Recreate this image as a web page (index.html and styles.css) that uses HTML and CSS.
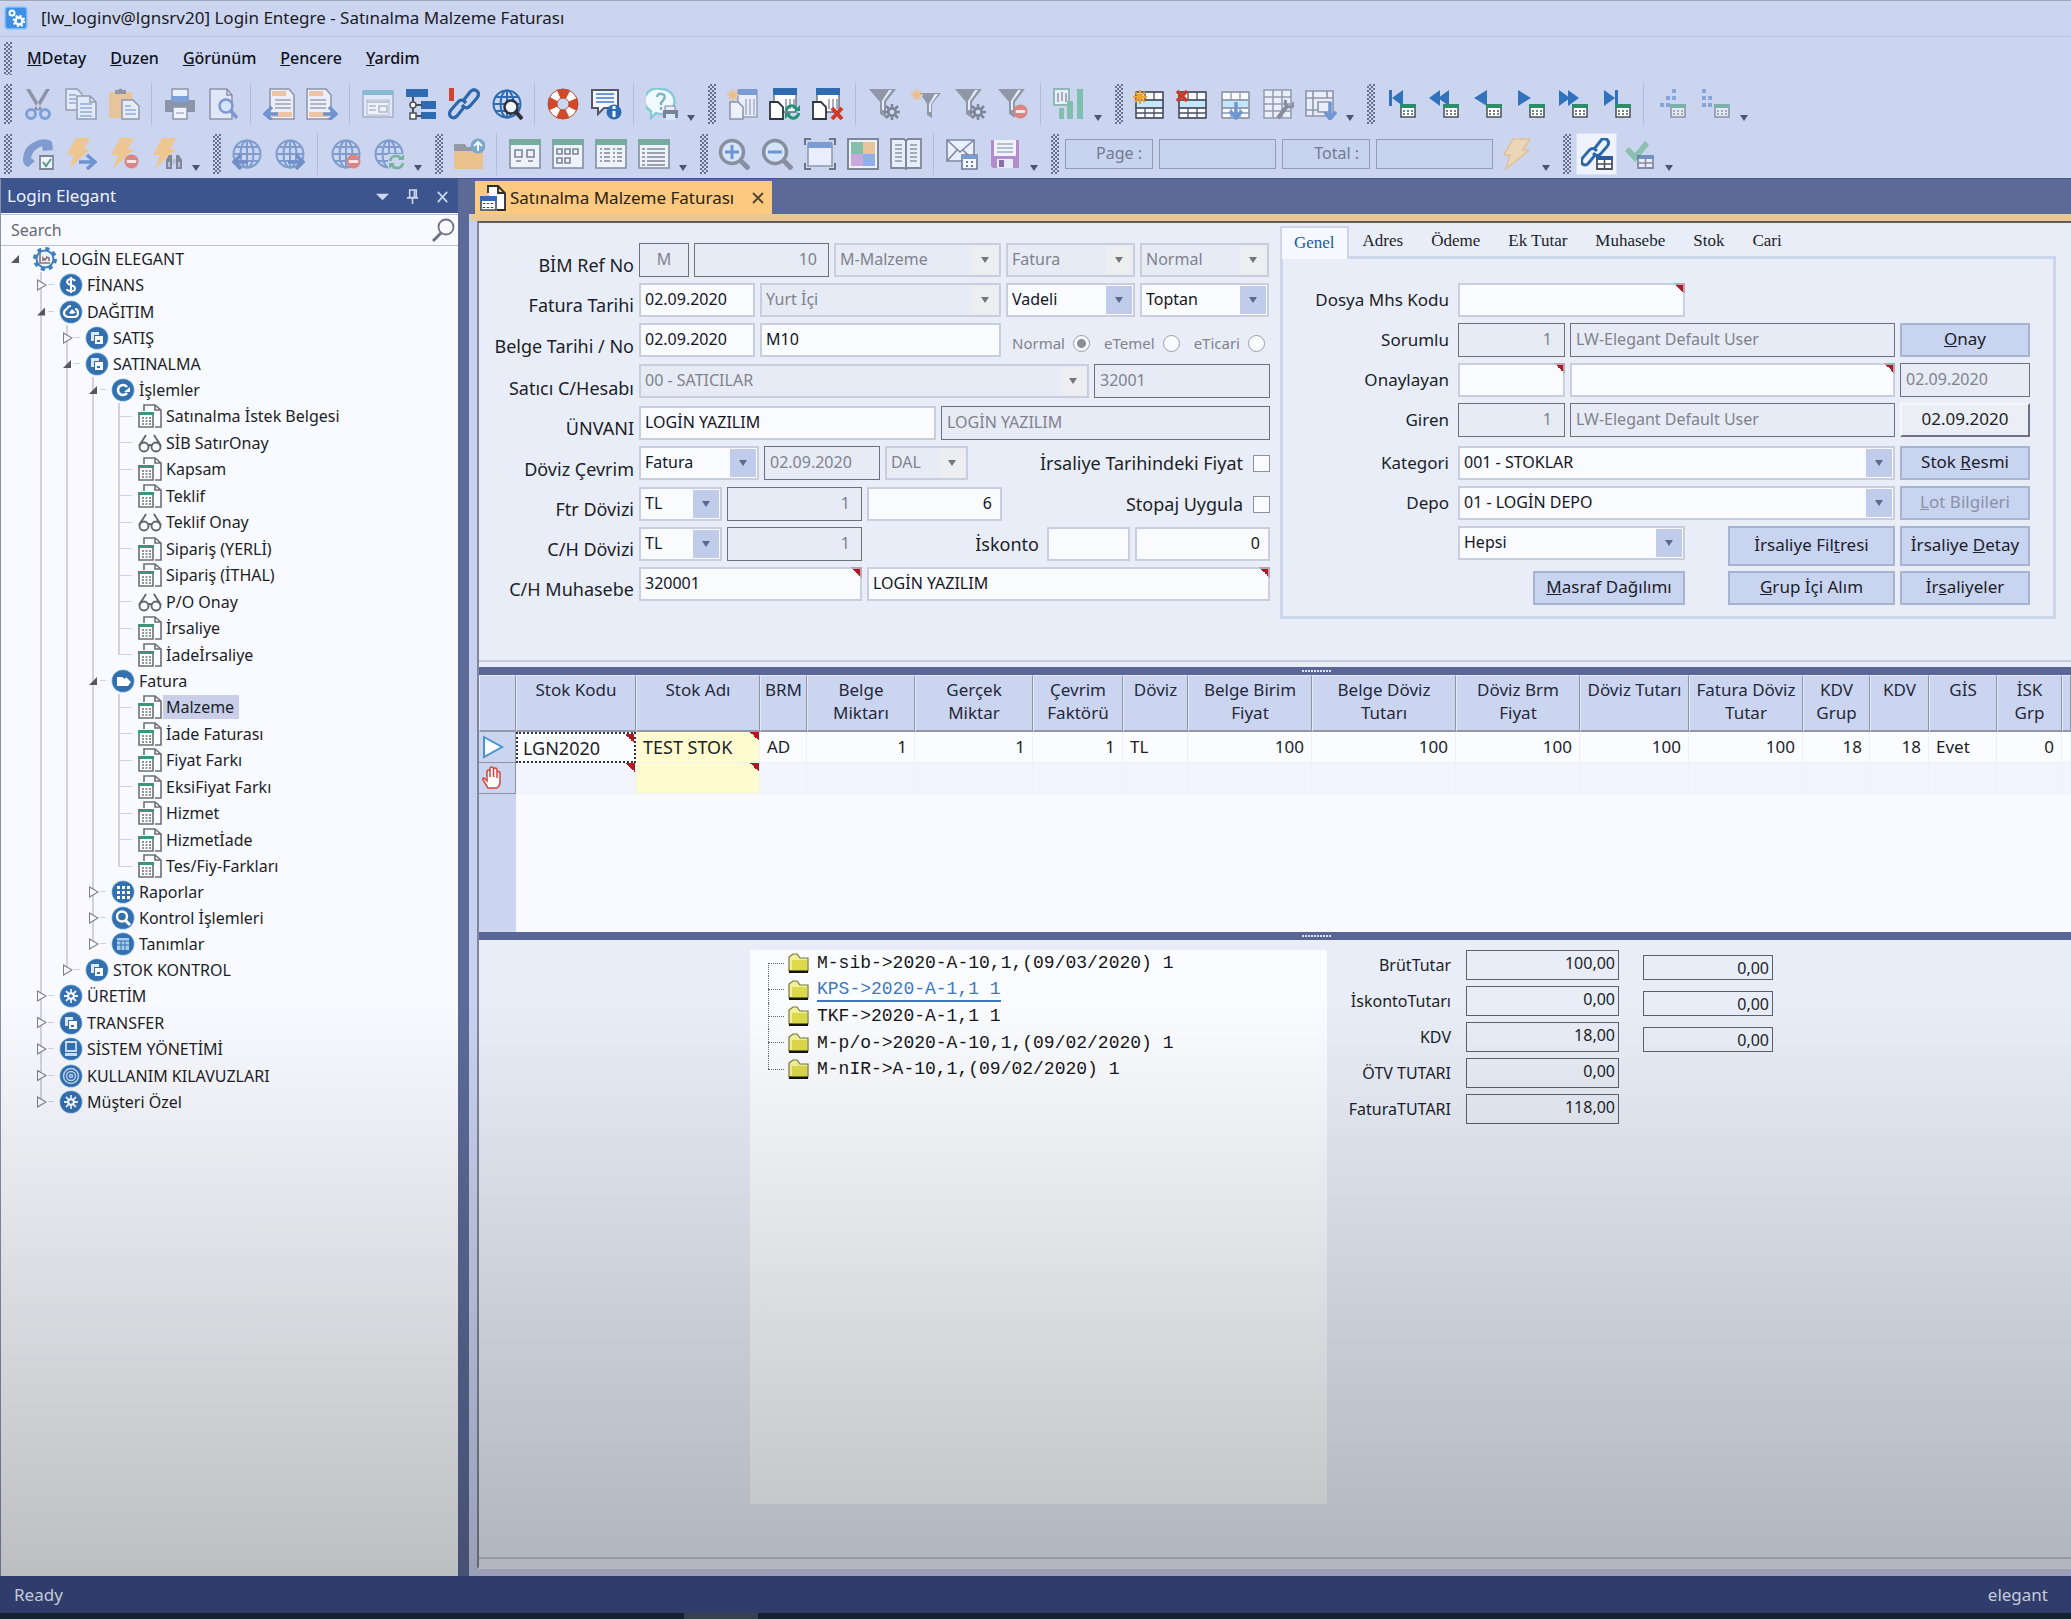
FILE: index.html
```html
<!DOCTYPE html>
<html lang="tr">
<head>
<meta charset="utf-8">
<title>[lw_loginv@lgnsrv20] Login Entegre - Satınalma Malzeme Faturası</title>
<link rel="stylesheet" href="styles.css">
</head>
<body>
<svg class="sprite" aria-hidden="true">
  <defs>
    <!-- toolbar, 32 x 32 -->
    <symbol id="cut" viewBox="0 0 32 32"><path d="M4 1l4 0 12 20-3 2zM28 1l-4 0-12 20 3 2z" fill="#8b93a5"/><circle cx="9" cy="26" r="4.500" fill="none" stroke="#7da0da" stroke-width="3"/><circle cx="23" cy="26" r="4.500" fill="none" stroke="#7da0da" stroke-width="3"/></symbol>
    <symbol id="copy" viewBox="0 0 32 32"><g fill="#e2e9f8" stroke="#939cb0" stroke-width="1.5"><path d="M1 1h11l5 5v16H1z"/><path d="M12 8h13l6 6v17H12z"/><path d="M25 8v6h6" fill="none"/></g><path d="M4 7h7M4 11h7M4 15h7M15 16h12M15 20h12M15 24h12M15 28h12" stroke="#94a9d4" stroke-width="1.5"/></symbol>
    <symbol id="paste" viewBox="0 0 32 32"><path d="M1 4h23v26H1z" fill="#e8c49a"/><path d="M7 6V2h3q2-3 5 0h3v4z" fill="#8f96a6"/><path d="M14 12h11l6 6v13H14z" fill="#e6ecfa" stroke="#8f98ab" stroke-width="1.5"/><path d="M17 18h6M17 22h11M17 26h11" stroke="#94a9d4" stroke-width="1.5"/></symbol>
    <symbol id="print" viewBox="0 0 32 32"><path d="M8 1h16v9H8z" fill="#e9eefb" stroke="#8b94a8" stroke-width="1.5"/><path d="M1 12h30v12H1z" fill="#8b94a8"/><path d="M7 8h18v6H7z" fill="#7da0da"/><path d="M9 19h14v12H9z" fill="#eef2fc" stroke="#8b94a8" stroke-width="1.5"/><path d="M12 25h8" stroke="#8b94a8"/></symbol>
    <symbol id="preview" viewBox="0 0 32 32"><path d="M3 1h17l5 6v24H3z" fill="#dfe7f8" stroke="#8b94a8" stroke-width="1.5"/><path d="M20 1v6h5" fill="none" stroke="#8b94a8" stroke-width="1.5"/><circle cx="19" cy="18" r="6.500" fill="#d3e4fb" stroke="#7d97cf" stroke-width="2.500"/><path d="M24 23l6 7" stroke="#7d97cf" stroke-width="3.500"/></symbol>
    <symbol id="import" viewBox="0 0 32 32"><path d="M7 1h19l5 6v24H7z" fill="#eceffa" stroke="#8b94a8" stroke-width="1.500"/><path d="M9 3h14v5H9zM9 24h20v5H9z" fill="#edc4a4"/><path d="M12 12h16M12 16h16M12 20h16" stroke="#9aa2b4" stroke-width="1.500"/><path d="M15 26H3M9 19l-7 7 7 6" fill="none" stroke="#6f93d0" stroke-width="3.500"/></symbol>
    <symbol id="export" viewBox="0 0 32 32"><path d="M1 1h19l5 6v24H1z" fill="#eceffa" stroke="#8b94a8" stroke-width="1.500"/><path d="M3 3h14v5H3zM3 24h20v5H3z" fill="#edc4a4"/><path d="M4 12h16M4 16h16M4 20h16" stroke="#9aa2b4" stroke-width="1.500"/><path d="M17 26h12M23 19l7 7-7 6" fill="none" stroke="#6f93d0" stroke-width="3.500"/></symbol>
    <symbol id="form" viewBox="0 0 32 32"><path d="M1 3h30v26H1z" fill="#dfe7f8" stroke="#a6afc4" stroke-width="1.500"/><path d="M1 2h30v5H1z" fill="#86b9d3"/><path d="M5 12h22v15H5z" fill="#eef2fb" stroke="#b0b8ca"/><path d="M5 14h22M7 18h7M7 22h7M17 18h8v6h-8z" fill="none" stroke="#b0b8ca" stroke-width="1.600"/></symbol>
    <symbol id="flow" viewBox="0 0 32 32"><path d="M1 1h22v8H1zM16 13h15v8H16zM16 24h15v7H16z" fill="#2f6bb0"/><path d="M8 9v16M8 17h9M8 28h9" stroke="#4a505c" stroke-width="2"/><circle cx="8" cy="17" r="3" fill="#fff" stroke="#4a505c" stroke-width="1.500"/><path d="M5 25h6v6H5z" fill="#fff" stroke="#4a505c" stroke-width="1.500"/></symbol>
    <symbol id="chain" viewBox="0 0 32 32"><g fill="none" stroke="#2c67ad" stroke-width="3.200" stroke-linejoin="round"><path d="M15 13l7-9q3-4 7-1 3 3 0 7l-7 8q-3 3-6 1l-2-2"/><path d="M17 18l-8 10q-3 3-6 1-3-3 0-7l7-8q3-3 6-1l2 2"/></g></symbol>
    <symbol id="link" viewBox="0 0 32 32"><use href="#chain"/><path d="M1 0h5v13H1z" fill="#cf4330"/></symbol>
    <symbol id="globe" viewBox="0 0 32 32"><g fill="none" stroke-width="2"><circle cx="16" cy="16" r="13.500"/><ellipse cx="16" cy="16" rx="6.500" ry="13.500"/><path d="M16 2v28M3 16h26M5 9h22M5 23h22"/></g></symbol>
    <symbol id="globefind" viewBox="0 0 32 32"><use href="#globe" stroke="#2f6bb0"/><circle cx="20" cy="19" r="6.500" fill="#eef4ff" stroke="#2c313b" stroke-width="2.500"/><path d="M25 24l6 7" stroke="#2c313b" stroke-width="4"/></symbol>
    <symbol id="buoy" viewBox="0 0 32 32"><circle cx="16" cy="16" r="10.500" fill="none" stroke="#fff" stroke-width="9"/><circle cx="16" cy="16" r="10.500" fill="none" stroke="#d2482a" stroke-width="9" stroke-dasharray="9.500 7" stroke-dashoffset="4.700"/><circle cx="16" cy="16" r="15" fill="none" stroke="#b5482f"/><circle cx="16" cy="16" r="6" fill="none" stroke="#b5482f"/></symbol>
    <symbol id="tip" viewBox="0 0 32 32"><path d="M2 2h26v18H14l-6 6v-6H2z" fill="#f3f6ff" stroke="#50586a" stroke-width="2"/><path d="M6 6h18M6 10h18M6 14h18" stroke="#6f9ad6" stroke-width="2"/><circle cx="24" cy="24" r="7.500" fill="#2f6bb0"/><path d="M24 18v3M24 23v6" stroke="#fff" stroke-width="3"/></symbol>
    <symbol id="help" viewBox="0 0 32 32"><path d="M15 1a13 12 0 0 1 0 25q-3 0-5-1l-5 5v-7A13 12 0 0 1 15 1z" fill="#f1fbff" stroke="#86cbd6" stroke-width="2.500"/><path d="M11 9q1-4 5-3 4 1 2 5l-3 4v2M15 19v3" fill="none" stroke="#7eb4c4" stroke-width="2.500"/><path d="M19 18h10v5h-10z" fill="#e8eefb" stroke="#7a8498"/><path d="M17 22h15v8H17z" fill="#77839a"/><path d="M20 26h9v6h-9z" fill="#dbe7fb"/></symbol>
    <symbol id="newrec" viewBox="0 0 32 32"><path d="M12 2h19v27H12z" fill="#e6ecf9" stroke="#96a0b5" stroke-width="1.500"/><path d="M12 1h19v6H12z" fill="#7b9bd4"/><path d="M20 11v16M24 11v16M28 11v16" stroke="#a7b0c2" stroke-width="1.500"/><path d="M4 14h8l5 5v12H4z" fill="#edf1fb" stroke="#8992a6" stroke-width="1.500"/><path d="M7 1v12M1 7h12M3 3l8 8M11 3l-8 8" stroke="#edc08b" stroke-width="1.800"/></symbol>
    <symbol id="tabledoc" viewBox="0 0 32 32"><path d="M5 2h22v22H5z" fill="#fff" stroke="#5d6575" stroke-width="1.300"/><path d="M4 0h24v7H4z" fill="#2f6bb0"/><path d="M17 11v10M21 11v10M25 11v10" stroke="#8d95a4" stroke-width="1.500"/><path d="M1 14h8l5 5v12H1z" fill="#fff" stroke="#30343d" stroke-width="1.800"/></symbol>
    <symbol id="refreshrec" viewBox="0 0 32 32"><use href="#tabledoc"/><path d="M17 23q2-6 7-5 3 1 4 4M30 25q-2 6-7 5-3-1-4-4" fill="none" stroke="#249376" stroke-width="3"/><path d="M31 17v6h-6zM16 31v-6h6z" fill="#249376"/></symbol>
    <symbol id="delrec" viewBox="0 0 32 32"><use href="#tabledoc"/><path d="M20 20l10 11M30 20L20 31" stroke="#d33a26" stroke-width="4"/></symbol>
    <symbol id="funnel" viewBox="0 0 32 32"><path d="M1 1h27L18 14v16l-6-4V14z" fill="#8f97a8"/><path d="M21 2h3l-8 11v9h-2v-9z" fill="#e7ecf8"/></symbol>
    <symbol id="gear" viewBox="0 0 16 16"><path d="M8 0v16M0 8h16M2 2l12 12M14 2L2 14" stroke-width="2.600"/><circle cx="8" cy="8" r="3.700" fill="#d7dff4" stroke-width="2.800"/></symbol>
    <symbol id="filterset" viewBox="0 0 32 32"><use href="#funnel"/><use href="#gear" x="16" y="16" width="16" height="16" stroke="#7e8799"/></symbol>
    <symbol id="filternew" viewBox="0 0 32 32"><path d="M9 5h21L21 16v14l-5-3V16z" fill="#8f97a8"/><path d="M24 6h3l-7 10v8h-2v-8z" fill="#e7ecf8"/><path d="M6 1v11M0 7h12M2 3l8 8M10 3l-8 8" stroke="#edc08b" stroke-width="1.800"/></symbol>
    <symbol id="stop" viewBox="0 0 16 16"><circle cx="8" cy="8" r="7.500" fill="#d98583"/><path d="M3 8h10" stroke="#fbecee" stroke-width="3"/></symbol>
    <symbol id="filterdel" viewBox="0 0 32 32"><use href="#funnel"/><use href="#stop" x="16" y="16" width="15" height="15"/></symbol>
    <symbol id="chart" viewBox="0 0 32 32"><path d="M1 1h15v16H1z" fill="#e8eefa" stroke="#8fb9b4" stroke-width="2"/><path d="M5 5v9M9 4v9M13 5v9" stroke="#8f97a8" stroke-width="1.500"/><path d="M6 20h5v11H6zM14 13h6v18h-6zM24 1h6v30h-6z" fill="#7fbfb0"/></symbol>
    <symbol id="gridbase" viewBox="0 0 32 32"><path d="M3 4h27v26H3z" fill="#f8faff"/><path d="M3 12h27v8H3z" fill="#c4e6fa"/><path d="M3 4h27v26H3zM3 12h27M3 20h27M12 4v8M21 4v8M12 20v10M21 20v10M3 25h27" fill="none" stroke-width="1.300"/></symbol>
    <symbol id="rownew" viewBox="0 0 32 32"><use href="#gridbase" stroke="#4a505d"/><path d="M7 2v14M0 9h14M2 4l10 10M12 4L2 14" stroke="#efa22f" stroke-width="2.200"/></symbol>
    <symbol id="rowdel" viewBox="0 0 32 32"><use href="#gridbase" stroke="#4a505d"/><path d="M1 3l10 10M11 3L1 13" stroke="#cf3a26" stroke-width="3.500"/></symbol>
    <symbol id="rowdown" viewBox="0 0 32 32"><use href="#gridbase" stroke="#8d96aa"/><path d="M17 14v15M11 23l6 7 6-7" fill="none" stroke="#6f96d4" stroke-width="3.500"/></symbol>
    <symbol id="rowtool" viewBox="0 0 32 32"><path d="M2 2h27v28H2z" fill="#e9eefa"/><path d="M2 2h27v28H2zM2 9h27M2 16h27M2 23h27M11 2v28M20 2v28" fill="none" stroke="#939cae" stroke-width="1.500"/><path d="M16 30l9-12" stroke="#858d9e" stroke-width="4"/><path d="M24 12q-2 4 1 6t6 0l1-4" fill="none" stroke="#858d9e" stroke-width="3"/></symbol>
    <symbol id="colmove" viewBox="0 0 32 32"><path d="M1 3h27v25H1z" fill="#e9eefa"/><path d="M1 3h27v25H1zM1 10h27M1 22h12M8 3v25M22 3v7M13 14h12v10H13z" fill="none" stroke="#8d96aa" stroke-width="1.600"/><path d="M25 14v15M20 24l5 7 6-7" fill="none" stroke="#6f96d4" stroke-width="3.500"/></symbol>
    <symbol id="cal" viewBox="0 0 16 14"><path d="M1 1h14v12H1z" fill="#fff" stroke="#4a505a" stroke-width="1.500"/><path d="M0 0h16v4H0z" fill="#2d8d69"/><path d="M4 6v2M8 6v2M12 6v2M4 9v2M8 9v2M12 9v2" stroke="#6a707a" stroke-width="1.800"/></symbol>
    <symbol id="first" viewBox="-3 0 32 32"><path d="M1 2h3v16H1zM15 2v16L4 10z" fill="#3272bd"/><use href="#cal" x="12" y="16" width="16" height="14"/></symbol>
    <symbol id="rew" viewBox="-3 0 32 32"><path d="M9 2v16L-2 10zM18 2v16L7 10z" fill="#3272bd"/><use href="#cal" x="12" y="16" width="16" height="14"/></symbol>
    <symbol id="prev" viewBox="-3 0 32 32"><path d="M13 2v16L0 10z" fill="#3272bd"/><use href="#cal" x="12" y="16" width="16" height="14"/></symbol>
    <symbol id="next" viewBox="-3 0 32 32"><path d="M1 2v16l13-8z" fill="#3272bd"/><use href="#cal" x="12" y="16" width="16" height="14"/></symbol>
    <symbol id="fwd" viewBox="-3 0 32 32"><path d="M-1 2v16l11-8zM8 2v16l11-8z" fill="#3272bd"/><use href="#cal" x="12" y="16" width="16" height="14"/></symbol>
    <symbol id="last" viewBox="-3 0 32 32"><path d="M1 2v16l11-8zM12 2h3v16h-3z" fill="#3272bd"/><use href="#cal" x="12" y="16" width="16" height="14"/></symbol>
    <symbol id="dotsl" viewBox="0 0 32 32"><path d="M16 1h4v4h-4zM10 8h4v4h-4zM16 8h4v4h-4zM4 15h4v4H4zM10 15h4v4h-4z" fill="#86a6d9"/><use href="#cal" x="14" y="16" width="16" height="14" opacity=".5"/></symbol>
    <symbol id="dotsr" viewBox="0 0 32 32"><path d="M3 1h4v4H3zM3 8h4v4H3zM9 8h4v4H9zM3 15h4v4H3zM9 15h4v4H9z" fill="#86a6d9"/><use href="#cal" x="15" y="16" width="16" height="14" opacity=".5"/></symbol>
    <symbol id="phone" viewBox="0 0 32 32"><path d="M1 22Q1 7 17 2q9-2 13 2l1 8-10 1-1-5Q10 12 9 20l4 3-7 6q-5-2-5-7z" fill="#7f9cd0"/><path d="M18 18h13v13H18z" fill="#eef2fc" stroke="#7f889b" stroke-width="1.800"/><path d="M21 24l3 4 5-7" fill="none" stroke="#5f9a86" stroke-width="2"/></symbol>
    <symbol id="boltshape" viewBox="0 0 32 32"><path d="M12 0h14l-6 11h6L5 31l5-14H3z" fill="#edc690"/></symbol>
    <symbol id="boltgo" viewBox="0 0 32 32"><use href="#boltshape" x="-1" y="0" width="32" height="32"/><path d="M14 24h14M22 17l8 7-8 7" fill="none" stroke="#6f93d0" stroke-width="3.500"/></symbol>
    <symbol id="boltstop" viewBox="0 0 32 32"><use href="#boltshape"/><use href="#stop" x="16" y="16" width="15" height="15"/></symbol>
    <symbol id="boltfind" viewBox="0 0 32 32"><use href="#boltshape" x="-1" y="0" width="32" height="32"/><path d="M15 31v-9l3-5h3v14zM31 31v-9l-3-5h-3v14z" fill="#7f8798"/><path d="M21 21h4v5h-4zM17 24h2v5h-2zM27 24h2v5h-2z" fill="#b9c2d6"/></symbol>
    <symbol id="globeback" viewBox="0 0 32 32"><use href="#globe" stroke="#7f9ccf"/><path d="M17 24H4M10 17l-7 7 7 7" fill="none" stroke="#6f8fc6" stroke-width="3.500"/></symbol>
    <symbol id="globegof" viewBox="0 0 32 32"><use href="#globe" stroke="#7f9ccf"/><path d="M14 24h14M22 17l7 7-7 7" fill="none" stroke="#6f8fc6" stroke-width="3.500"/></symbol>
    <symbol id="globestop" viewBox="0 0 32 32"><use href="#globe" stroke="#7f9ccf"/><use href="#stop" x="16" y="16" width="15" height="15"/></symbol>
    <symbol id="globesync" viewBox="0 0 32 32"><use href="#globe" stroke="#7f9ccf"/><path d="M15 16h17v16H15z" fill="#cbd5f0"/><path d="M17 23q1-5 6-5 4 0 5 3M30 25q-1 5-6 5-4 0-5-3" fill="none" stroke="#76b39b" stroke-width="2.500"/><path d="M31 16v6h-6zM16 31v-6h6z" fill="#76b39b"/></symbol>
    <symbol id="folderup" viewBox="0 0 32 32"><path d="M1 6h11l2 3h14v4H1z" fill="#9299a8"/><path d="M1 13h29v18H1z" fill="#eac08c"/><circle cx="25" cy="8" r="7.500" fill="#7aa7cf"/><path d="M25 13V4M21 8l4-4 4 4" fill="none" stroke="#f2f7ff" stroke-width="2"/></symbol>
    <symbol id="view" viewBox="0 0 32 32"><path d="M1 2h30v28H1z" fill="#eef2fb" stroke="#858d9d" stroke-width="1.600"/><path d="M0 1h32v6H0z" fill="#77ab9f"/></symbol>
    <symbol id="view1" viewBox="0 0 32 32"><use href="#view"/><path d="M6 12h7v7H6zM18 12h7v7h-7zM7 23h5M19 23h5" fill="none" stroke="#7d8595" stroke-width="1.600"/></symbol>
    <symbol id="view2" viewBox="0 0 32 32"><use href="#view"/><path d="M5 11h5v5H5zM13 11h5v5h-5zM21 11h5v5h-5zM5 20h5v5H5zM13 20h5v5h-5z" fill="none" stroke="#7d8595" stroke-width="1.600"/></symbol>
    <symbol id="view3" viewBox="0 0 32 32"><use href="#view"/><path d="M5 11h2M9 11h6M5 15h2M9 15h6M5 19h2M9 19h6M5 23h2M9 23h6M18 11h2M22 11h5M18 15h2M22 15h5M18 19h2M22 19h5M18 23h2M22 23h5" stroke="#7d8595" stroke-width="1.600"/></symbol>
    <symbol id="view4" viewBox="0 0 32 32"><use href="#view"/><path d="M4 11h3M9 11h18M4 15h3M9 15h18M4 19h3M9 19h18M4 23h3M9 23h18M4 27h3M9 27h18" stroke="#7d8595" stroke-width="1.600"/></symbol>
    <symbol id="zoomin" viewBox="0 0 32 32"><circle cx="14" cy="14" r="11.500" fill="#d5e4fa" stroke="#878fa0" stroke-width="3.500"/><path d="M22 22l9 9" stroke="#878fa0" stroke-width="5"/><path d="M7 14h14M14 7v14" stroke="#6f93d0" stroke-width="3"/></symbol>
    <symbol id="zoomout" viewBox="0 0 32 32"><circle cx="14" cy="14" r="11.500" fill="#d5e4fa" stroke="#878fa0" stroke-width="3.500"/><path d="M22 22l9 9" stroke="#878fa0" stroke-width="5"/><path d="M7 14h14" stroke="#6f93d0" stroke-width="3"/></symbol>
    <symbol id="fit" viewBox="0 0 32 32"><path d="M4 6h24v22H4z" fill="#e8eefb" stroke="#8d96aa" stroke-width="1.500"/><path d="M4 4h24v6H4z" fill="#7b9bd4"/><path d="M1 7V1h6M25 1h6v6M31 25v6h-6M7 31H1v-6" fill="none" stroke="#6b7385" stroke-width="2"/></symbol>
    <symbol id="palette" viewBox="0 0 32 32"><path d="M1 1h30v30H1z" fill="#eef1fa" stroke="#7f8798" stroke-width="2"/><path d="M4 4h12v12H4z" fill="#83bfad"/><path d="M16 4h12v12H16z" fill="#e8c49a"/><path d="M4 16h12v12H4z" fill="#c9a9dc"/><path d="M16 16h12v12H16z" fill="#8fb0ea"/></symbol>
    <symbol id="book" viewBox="0 0 32 32"><path d="M1 1h13l2 2 2-2h13v29H18l-2 1-2-1H1z" fill="#e6eefa" stroke="#7f8798" stroke-width="1.800"/><path d="M16 3v28" stroke="#7f8798" stroke-width="2"/><path d="M5 7h7M5 11h7M5 15h7M5 19h7M5 23h7M20 7h7M20 11h7M20 15h7M20 19h7M20 23h7" stroke="#8f97a8" stroke-width="1.600"/></symbol>
    <symbol id="mail" viewBox="0 0 32 32"><path d="M1 2h27v21H1z" fill="#eaf0fb" stroke="#8088a0" stroke-width="1.600"/><path d="M1 2l13 12L28 2M1 23l10-11M28 23L17 12" fill="none" stroke="#8088a0" stroke-width="1.600"/><path d="M16 17h15v14H16z" fill="#f3f6fd" stroke="#6d7b9c" stroke-width="1.600"/><path d="M16 17h15v4H16z" fill="#7b9bd4"/><path d="M20 24h2M25 24h2M20 28h2M25 28h2" stroke="#6d7b9c" stroke-width="2"/></symbol>
    <symbol id="save" viewBox="0 0 32 32"><path d="M2 2h28v28H4l-2-2z" fill="#b48bcb"/><path d="M5 2h22v16H5z" fill="#eff3fc"/><path d="M8 6h16M8 10h16M8 14h16" stroke="#a5adbd" stroke-width="1.600"/><path d="M8 21h16v9H8z" fill="#e6ebf7"/><path d="M10 22h5v7h-5z" fill="#8a70a5"/></symbol>
    <symbol id="run" viewBox="0 0 32 32"><path d="M12 1h17l-7 11h6L5 31l4-14H3z" fill="#ecd6b8" stroke="#e0c096" stroke-width="1.500"/></symbol>
    <symbol id="tbl" viewBox="0 0 17 14"><path d="M1 1h15v12H1z" fill="#fff" stroke="#4b5261" stroke-width="1.800"/><path d="M0 0h17v4H0z" fill="#2c5c9c"/><path d="M8.500 4v9M1 8h15" stroke="#4b5261" stroke-width="1.600"/></symbol>
    <symbol id="linktable" viewBox="0 0 32 32"><use href="#chain" x="-1" y="-1" width="30" height="30"/><use href="#tbl" x="15" y="18" width="17" height="14"/></symbol>
    <symbol id="checktable" viewBox="0 0 32 32"><path d="M1 13l4-4 6 6L21 3l4 4-14 17z" fill="#8bbfb0"/><use href="#tbl" x="13" y="17" width="17" height="14" opacity=".55"/></symbol>
    <!-- navigation tree, 24 x 24 -->
    <symbol id="disc" viewBox="0 0 24 24"><circle cx="12" cy="12" r="11.500" fill="#8cc4f2"/><circle cx="12" cy="12" r="10.800" fill="#346fae"/></symbol>
    <symbol id="t-root" viewBox="0 0 24 24"><circle cx="12" cy="12" r="10" fill="none" stroke="#3f7fbd" stroke-width="4" stroke-dasharray="4 3.850"/><circle cx="12" cy="12" r="8.500" fill="#eef3fb" stroke="#3f7fbd" stroke-width="2"/><path d="M7 6v10h10M10 14v-3l2 2 2-3 2 1v3" fill="none" stroke="#8a6f78" stroke-width="1.600"/></symbol>
    <symbol id="t-money" viewBox="0 0 24 24"><use href="#disc"/><path d="M16 8q-1-2-4-2t-4 2.500q0 2.500 4 3.500t4 3.500-4 2.500-4-2M12 4v16" fill="none" stroke="#fff" stroke-width="2"/></symbol>
    <symbol id="t-dist" viewBox="0 0 24 24"><use href="#disc"/><path d="M8 9q-3 1-3 4t4 4h6q4 0 4-4t-3-4M8 9q1-3 4-3" fill="none" stroke="#fff" stroke-width="2.200"/><path d="M10 13l3-4 4 4h-2q-1 2-5 0z" fill="#fff"/></symbol>
    <symbol id="t-copy" viewBox="0 0 24 24"><use href="#disc"/><path d="M6 6h8v3H9v6H6z" fill="#d9e7f7"/><path d="M10 10h8v8h-8z" fill="#fff"/><path d="M12 14h3v2h-3z" fill="#346fae"/></symbol>
    <symbol id="t-cycle" viewBox="0 0 24 24"><use href="#disc"/><path d="M16 9a5 5 0 1 0 0 6" fill="none" stroke="#fff" stroke-width="2.600"/><path d="M19 9v5h-6z" fill="#fff"/></symbol>
    <symbol id="t-inv" viewBox="0 0 24 24"><use href="#disc"/><path d="M6 8h5l3 2 1-2 5 5-3 4H6z" fill="#fff"/></symbol>
    <symbol id="t-grid" viewBox="0 0 24 24"><use href="#disc"/><path d="M6 6h3v3H6zM11 6h3v3h-3zM16 6h3v3h-3zM6 11h3v3H6zM11 11h3v3h-3zM16 11h3v3h-3zM6 16h3v3H6zM11 16h3v3h-3zM16 16h3v3h-3z" fill="#fff"/></symbol>
    <symbol id="t-find" viewBox="0 0 24 24"><use href="#disc"/><circle cx="11" cy="10.500" r="5" fill="none" stroke="#fff" stroke-width="2.400"/><path d="M14 14l5 5" stroke="#fff" stroke-width="3"/></symbol>
    <symbol id="t-def" viewBox="0 0 24 24"><use href="#disc"/><path d="M6 6h12v12H6z" fill="#a9cdef"/><path d="M6 9h12M6 13h12M10 9v9M14 9v9" stroke="#346fae"/></symbol>
    <symbol id="t-gear" viewBox="0 0 24 24"><use href="#disc"/><path d="M12 5v14M5 12h14M7 7l10 10M17 7L7 17" stroke="#e4eefa" stroke-width="1.800"/><circle cx="12" cy="12" r="2.800" fill="#346fae" stroke="#fff" stroke-width="2"/></symbol>
    <symbol id="t-pc" viewBox="0 0 24 24"><use href="#disc"/><path d="M7 5h10v9H7z" fill="none" stroke="#cfe2f6" stroke-width="1.800"/><path d="M6 16h12v3H6z" fill="#cfe2f6"/></symbol>
    <symbol id="t-guide" viewBox="0 0 24 24"><use href="#disc"/><g fill="none" stroke="#b9d5f0" stroke-width="1.500"><circle cx="12" cy="12" r="7.500"/><circle cx="12" cy="12" r="4.500"/><circle cx="12" cy="12" r="1.500"/></g></symbol>
    <symbol id="t-doc" viewBox="0 0 24 24"><path d="M6 7V1h11l6 5v17h-6M17 1v5h6" fill="#fbfcff" stroke="#6d6f76" stroke-width="1.600"/><path d="M1 9h14v14H1z" fill="#fff" stroke="#6d6f76" stroke-width="1.600"/><path d="M0 8h16v3H0z" fill="#3f9478"/><path d="M4 14h2M7.500 14h2M11 14h2M4 17h2M7.500 17h2M11 17h2M4 20h2M7.500 20h2M11 20h2" stroke="#6d6f76" stroke-width="1.600"/></symbol>
    <symbol id="t-glasses" viewBox="0 0 24 24"><g fill="none" stroke="#5f6269" stroke-width="1.800"><circle cx="6" cy="16" r="4.500"/><circle cx="18" cy="16" r="4.500"/><path d="M10 15q2-2 4 0M1 15l7-11M23 15l-7-11"/></g></symbol>
    <symbol id="folder" viewBox="0 0 21 20"><path d="M1 18V4l4-3h4l3 4h8v13z" fill="#f3f09a" stroke="#77763c" stroke-width="1.200"/><path d="M4 7h15v11H4z" fill="#dcd94c"/><path d="M1 17.500h19v2.500H1z" fill="#15140a"/></symbol>
  </defs>
</svg>

<header class="titlebar">
  <svg class="appicon" viewBox="0 0 24 24"><rect x="1" y="1" width="22" height="22" rx="3" fill="#3f8fe6" stroke="#8ec6fa" stroke-width="1.500"/><g fill="none" stroke="#fff"><circle cx="8" cy="7" r="2.500" stroke-width="2"/><circle cx="15" cy="15" r="3.500" stroke-width="2.500"/><circle cx="15" cy="15" r="5.300" stroke-width="2" stroke-dasharray="2 2.160"/></g></svg>
  <h1>[lw_loginv@lgnsrv20] Login Entegre - Satınalma Malzeme Faturası</h1>
</header>

<nav class="menubar" aria-label="Menü">
  <i class="grip"></i>
  <button><u>M</u>Detay</button><button><u>D</u>uzen</button><button><u>G</u>örünüm</button><button><u>P</u>encere</button><button><u>Y</u>ardim</button>
</nav>

<div class="toolbar" role="toolbar" aria-label="Standart">
  <i class="grip"></i>
  <button aria-label="Kes"><svg><use href="#cut"/></svg></button><button aria-label="Kopyala"><svg><use href="#copy"/></svg></button><button aria-label="Yapıştır"><svg><use href="#paste"/></svg></button><i class="sep"></i>
  <button aria-label="Yazdır"><svg><use href="#print"/></svg></button><button aria-label="Önizleme"><svg><use href="#preview"/></svg></button><i class="sep"></i>
  <button aria-label="İçe al"><svg><use href="#import"/></svg></button><button aria-label="Dışa ver"><svg><use href="#export"/></svg></button><i class="sep"></i>
  <button aria-label="Form"><svg><use href="#form"/></svg></button><button aria-label="Akış"><svg><use href="#flow"/></svg></button><button aria-label="Bağlantı"><svg><use href="#link"/></svg></button><button aria-label="Web ara"><svg><use href="#globefind"/></svg></button><i class="sep"></i>
  <button aria-label="Destek"><svg><use href="#buoy"/></svg></button><button aria-label="Bilgi"><svg><use href="#tip"/></svg></button><i class="sep"></i>
  <button aria-label="Yardım"><svg><use href="#help"/></svg></button><button class="more" aria-label="Diğer"></button>
  <i class="grip"></i>
  <button aria-label="Yeni kayıt"><svg><use href="#newrec"/></svg></button><button aria-label="Kaydı yenile"><svg><use href="#refreshrec"/></svg></button><button aria-label="Kaydı sil"><svg><use href="#delrec"/></svg></button><i class="sep"></i>
  <button aria-label="Filtre ayarı"><svg><use href="#filterset"/></svg></button><button aria-label="Yeni filtre"><svg><use href="#filternew"/></svg></button><button aria-label="Filtre düzenle"><svg><use href="#filterset"/></svg></button><button aria-label="Filtre kaldır"><svg><use href="#filterdel"/></svg></button><i class="sep"></i>
  <button aria-label="Grafik"><svg><use href="#chart"/></svg></button><button class="more" aria-label="Diğer"></button>
  <i class="grip"></i>
  <button aria-label="Satır ekle"><svg><use href="#rownew"/></svg></button><button aria-label="Satır sil"><svg><use href="#rowdel"/></svg></button><button aria-label="Satır indir"><svg><use href="#rowdown"/></svg></button><button aria-label="Tablo ayarı"><svg><use href="#rowtool"/></svg></button><button aria-label="Sütun taşı"><svg><use href="#colmove"/></svg></button><button class="more" aria-label="Diğer"></button>
  <i class="grip"></i>
  <button aria-label="İlk"><svg><use href="#first"/></svg></button><button aria-label="Hızlı geri"><svg><use href="#rew"/></svg></button><button aria-label="Önceki"><svg><use href="#prev"/></svg></button><button aria-label="Sonraki"><svg><use href="#next"/></svg></button><button aria-label="Hızlı ileri"><svg><use href="#fwd"/></svg></button><button aria-label="Son"><svg><use href="#last"/></svg></button><i class="sep"></i>
  <button aria-label="Üst düzey"><svg><use href="#dotsl"/></svg></button><button aria-label="Alt düzey"><svg><use href="#dotsr"/></svg></button><button class="more" aria-label="Diğer"></button>
</div>

<div class="toolbar tools" role="toolbar" aria-label="Araçlar">
  <i class="grip"></i>
  <button aria-label="Ara"><svg><use href="#phone"/></svg></button><button aria-label="Çalıştır"><svg><use href="#boltgo"/></svg></button><button aria-label="Durdur"><svg><use href="#boltstop"/></svg></button><button aria-label="İzle"><svg><use href="#boltfind"/></svg></button><button class="more" aria-label="Diğer"></button>
  <i class="grip"></i>
  <button aria-label="Web geri"><svg><use href="#globeback"/></svg></button><button aria-label="Web ileri"><svg><use href="#globegof"/></svg></button><i class="sep"></i>
  <button aria-label="Web durdur"><svg><use href="#globestop"/></svg></button><button aria-label="Web yenile"><svg><use href="#globesync"/></svg></button><button class="more" aria-label="Diğer"></button>
  <i class="grip"></i>
  <button aria-label="Üst klasör"><svg><use href="#folderup"/></svg></button><i class="sep"></i>
  <button aria-label="Büyük simge"><svg><use href="#view1"/></svg></button><button aria-label="Küçük simge"><svg><use href="#view2"/></svg></button><button aria-label="Liste"><svg><use href="#view3"/></svg></button><button aria-label="Ayrıntı"><svg><use href="#view4"/></svg></button><button class="more" aria-label="Diğer"></button>
  <i class="grip"></i>
  <button aria-label="Yakınlaştır"><svg><use href="#zoomin"/></svg></button><button aria-label="Uzaklaştır"><svg><use href="#zoomout"/></svg></button><button aria-label="Sığdır"><svg><use href="#fit"/></svg></button><button aria-label="Renkler"><svg><use href="#palette"/></svg></button><button aria-label="Sayfalar"><svg><use href="#book"/></svg></button><i class="sep"></i>
  <button aria-label="Posta"><svg><use href="#mail"/></svg></button><button aria-label="Kaydet"><svg><use href="#save"/></svg></button><button class="more" aria-label="Diğer"></button>
  <i class="grip"></i>
  <div class="pager"><label class="box" for="page">Page :</label><input class="box wide" id="page" disabled><label class="box" for="total">Total :</label><input class="box wide" id="total" disabled></div>
  <button aria-label="Yürüt"><svg><use href="#run"/></svg></button><button class="more" aria-label="Diğer"></button>
  <i class="grip"></i>
  <button class="on" aria-label="Bağla" aria-pressed="true"><svg><use href="#linktable"/></svg></button><button aria-label="Onayla"><svg><use href="#checktable"/></svg></button><button class="more" aria-label="Diğer"></button>
</div>

<div class="workspace">
  <aside class="side">
    <div class="side-head"><h2>Login Elegant</h2>
      <button aria-label="Menü"><svg viewBox="0 0 16 16"><path d="M1 5h14l-7 7z" fill="#cdd7ee"/></svg></button>
      <button aria-label="Sabitle"><svg viewBox="0 0 16 16"><path d="M5 1h7v8H5zM10 1v8M2 9.500h12M8 10v6" fill="none" stroke="#cdd7ee" stroke-width="1.700"/></svg></button>
      <button aria-label="Kapat"><svg viewBox="0 0 16 16"><path d="M3 3l10 11M13 3L3 14" stroke="#cdd7ee" stroke-width="1.800"/></svg></button>
    </div>
    <div class="search"><input type="text" placeholder="Search" aria-label="Search"><svg viewBox="0 0 24 24"><circle cx="15" cy="9" r="7.500" fill="none" stroke="#6d7184" stroke-width="1.800"/><path d="M10 15l-8 8" stroke="#6d7184" stroke-width="3"/></svg></div>
    <ul class="tree">
      <li class="root"><div class="row"><i class="tw open"></i><svg><use href="#t-root"/></svg><span>LOGİN ELEGANT</span></div>
        <ul class="areas">
          <li><div class="row"><i class="tw"></i><svg><use href="#t-money"/></svg><span>FİNANS</span></div></li>
          <li><div class="row"><i class="tw open"></i><svg><use href="#t-dist"/></svg><span>DAĞITIM</span></div>
            <ul>
              <li><div class="row"><i class="tw"></i><svg><use href="#t-copy"/></svg><span>SATIŞ</span></div></li>
              <li><div class="row"><i class="tw open"></i><svg><use href="#t-copy"/></svg><span>SATINALMA</span></div>
                <ul>
                  <li><div class="row"><i class="tw open"></i><svg><use href="#t-cycle"/></svg><span>İşlemler</span></div>
                    <ul class="leaves">
                      <li><div class="row"><svg><use href="#t-doc"/></svg><span>Satınalma İstek Belgesi</span></div></li>
                      <li><div class="row"><svg><use href="#t-glasses"/></svg><span>SİB SatırOnay</span></div></li>
                      <li><div class="row"><svg><use href="#t-doc"/></svg><span>Kapsam</span></div></li>
                      <li><div class="row"><svg><use href="#t-doc"/></svg><span>Teklif</span></div></li>
                      <li><div class="row"><svg><use href="#t-glasses"/></svg><span>Teklif Onay</span></div></li>
                      <li><div class="row"><svg><use href="#t-doc"/></svg><span>Sipariş (YERLİ)</span></div></li>
                      <li><div class="row"><svg><use href="#t-doc"/></svg><span>Sipariş (İTHAL)</span></div></li>
                      <li><div class="row"><svg><use href="#t-glasses"/></svg><span>P/O Onay</span></div></li>
                      <li><div class="row"><svg><use href="#t-doc"/></svg><span>İrsaliye</span></div></li>
                      <li><div class="row"><svg><use href="#t-doc"/></svg><span>İadeİrsaliye</span></div></li>
                    </ul>
                  </li>
                  <li><div class="row"><i class="tw open"></i><svg><use href="#t-inv"/></svg><span>Fatura</span></div>
                    <ul class="leaves">
                      <li><div class="row"><svg><use href="#t-doc"/></svg><span class="sel">Malzeme</span></div></li>
                      <li><div class="row"><svg><use href="#t-doc"/></svg><span>İade Faturası</span></div></li>
                      <li><div class="row"><svg><use href="#t-doc"/></svg><span>Fiyat Farkı</span></div></li>
                      <li><div class="row"><svg><use href="#t-doc"/></svg><span>EksiFiyat Farkı</span></div></li>
                      <li><div class="row"><svg><use href="#t-doc"/></svg><span>Hizmet</span></div></li>
                      <li><div class="row"><svg><use href="#t-doc"/></svg><span>Hizmetİade</span></div></li>
                      <li><div class="row"><svg><use href="#t-doc"/></svg><span>Tes/Fiy-Farkları</span></div></li>
                    </ul>
                  </li>
                  <li><div class="row"><i class="tw"></i><svg><use href="#t-grid"/></svg><span>Raporlar</span></div></li>
                  <li><div class="row"><i class="tw"></i><svg><use href="#t-find"/></svg><span>Kontrol İşlemleri</span></div></li>
                  <li><div class="row"><i class="tw"></i><svg><use href="#t-def"/></svg><span>Tanımlar</span></div></li>
                </ul>
              </li>
              <li><div class="row"><i class="tw"></i><svg><use href="#t-copy"/></svg><span>STOK KONTROL</span></div></li>
            </ul>
          </li>
          <li><div class="row"><i class="tw"></i><svg><use href="#t-gear"/></svg><span>ÜRETİM</span></div></li>
          <li><div class="row"><i class="tw"></i><svg><use href="#t-copy"/></svg><span>TRANSFER</span></div></li>
          <li><div class="row"><i class="tw"></i><svg><use href="#t-pc"/></svg><span>SİSTEM YÖNETİMİ</span></div></li>
          <li><div class="row"><i class="tw"></i><svg><use href="#t-guide"/></svg><span>KULLANIM KILAVUZLARI</span></div></li>
          <li><div class="row"><i class="tw"></i><svg><use href="#t-gear"/></svg><span>Müşteri Özel</span></div></li>
        </ul>
      </li>
    </ul>
  </aside>

  <main class="doc">
    <div class="doctabs">
      <div class="doctab"><svg viewBox="0 0 26 26"><path d="M8 8V1h10l7 7v17h-8M18 1v7h7" fill="#fff" stroke="#2b2b2b" stroke-width="1.800"/><path d="M1 12h15v13H1z" fill="#fff" stroke="#3a4a66" stroke-width="1.600"/><path d="M0 11h17v5H0z" fill="#2f6bb0"/><path d="M4 18v1M8 18v1M12 18v1M4 22v1M8 22v1M12 22v1" stroke="#3a4a66" stroke-width="2.500"/></svg><span>Satınalma Malzeme Faturası</span><button aria-label="Sekmeyi kapat"><svg viewBox="0 0 12 12"><path d="M1 1l10 10M11 1L1 11" stroke="#4f4332" stroke-width="1.800"/></svg></button></div>
    </div>
    <div class="frame">
      <form class="invoice">
        <div class="head">
          <label for="f-bim">BİM Ref No</label>
          <div class="fields"><input class="w50 mid" id="f-bim" value="M" disabled><input class="w135 num" aria-label="Ref No" value="10" disabled><select class="w167" aria-label="Tür" disabled><option>M-Malzeme</option></select><select class="w129" aria-label="Belge" disabled><option>Fatura</option></select><select class="w129" aria-label="Tip" disabled><option>Normal</option></select></div>
          <label for="f-ft">Fatura Tarihi</label>
          <div class="fields"><input class="w116" id="f-ft" value="02.09.2020"><select class="w241" aria-label="Bölge" disabled><option>Yurt İçi</option></select><select class="w129" aria-label="Vade"><option>Vadeli</option></select><select class="w129" aria-label="Satış"><option>Toptan</option></select></div>
          <label for="f-bt">Belge Tarihi / No</label>
          <div class="fields"><input class="w116" id="f-bt" value="02.09.2020"><input class="w241" aria-label="Belge No" value="M10"><div class="radios"><label>Normal <input type="radio" name="e" checked disabled></label><label>eTemel <input type="radio" name="e" disabled></label><label>eTicari <input type="radio" name="e" disabled></label></div></div>
          <label for="f-sc">Satıcı C/Hesabı</label>
          <div class="fields"><select class="grow" id="f-sc" disabled><option>00 - SATICILAR</option></select><input class="w176" aria-label="Hesap kodu" value="32001" disabled></div>
          <label for="f-un">ÜNVANI</label>
          <div class="fields"><input class="w297" id="f-un" value="LOGİN YAZILIM"><input class="grow" aria-label="Ünvan 2" value="LOGİN YAZILIM" disabled></div>
          <label for="f-dc">Döviz Çevrim</label>
          <div class="fields"><select class="w120" id="f-dc"><option>Fatura</option></select><input class="w116" aria-label="Çevrim tarihi" value="02.09.2020" disabled><select class="w83" aria-label="Kur" disabled><option>DAL</option></select><label class="tick">İrsaliye Tarihindeki Fiyat <input type="checkbox"></label></div>
          <label for="f-fd">Ftr Dövizi</label>
          <div class="fields"><select class="w83" id="f-fd"><option>TL</option></select><input class="w135 num" aria-label="Ftr kuru" value="1" disabled><input class="w135 num" aria-label="Hane" value="6"><label class="tick">Stopaj Uygula <input type="checkbox"></label></div>
          <label for="f-cd">C/H Dövizi</label>
          <div class="fields"><select class="w83" id="f-cd"><option>TL</option></select><input class="w135 num" aria-label="C/H kuru" value="1" disabled><label class="tick" for="f-isk">İskonto</label><input class="w83" id="f-isk" value=""><input class="w135 num" aria-label="İskonto tutarı" value="0"></div>
          <label for="f-cm">C/H Muhasebe</label>
          <div class="fields"><input class="w223 must" id="f-cm" value="320001"><input class="grow must" aria-label="Muhasebe adı" value="LOGİN YAZILIM"></div>
        </div>

        <section class="detail">
          <div class="tabs" role="tablist"><button type="button" role="tab" class="cur" aria-selected="true">Genel</button><button type="button" role="tab">Adres</button><button type="button" role="tab">Ödeme</button><button type="button" role="tab">Ek Tutar</button><button type="button" role="tab">Muhasebe</button><button type="button" role="tab">Stok</button><button type="button" role="tab">Cari</button></div>
          <div class="pane">
            <label for="g-mk">Dosya Mhs Kodu</label><div class="span"><input class="w227 must" id="g-mk"></div><span></span>
            <label for="g-so">Sorumlu</label><input class="num wide" id="g-so" value="1" disabled><input aria-label="Sorumlu adı" value="LW-Elegant Default User" disabled><button type="button"><u>O</u>nay</button>
            <label for="g-on">Onaylayan</label><input class="must" id="g-on"><input class="must" aria-label="Onaylayan adı"><input aria-label="Onay tarihi" value="02.09.2020" disabled>
            <label for="g-gi">Giren</label><input class="num wide" id="g-gi" value="1" disabled><input aria-label="Giren adı" value="LW-Elegant Default User" disabled><button type="button" class="raised">02.09.2020</button>
            <label for="g-ka">Kategori</label><select class="two" id="g-ka"><option>001 - STOKLAR</option></select><button type="button">Stok <u>R</u>esmi</button>
            <label for="g-de">Depo</label><select class="two" id="g-de"><option>01 - LOGİN DEPO</option></select><button type="button" disabled><u>L</u>ot Bilgileri</button>
            <span></span><div class="span"><select class="w227" aria-label="Kapsam"><option>Hepsi</option></select><button type="button" class="w167 tall">İrsaliye Fil<u>t</u>resi</button></div><button type="button" class="tall">İrsaliye <u>D</u>etay</button>
            <span></span><div class="span end"><button type="button" class="w152"><u>M</u>asraf Dağılımı</button><button type="button" class="w167"><u>G</u>rup İçi Alım</button></div><button type="button">İr<u>s</u>aliyeler</button>
          </div>
        </section>
      </form>

      <div class="split"><i></i></div>

      <div class="lines">
        <table>
          <colgroup><col class="c37"><col class="c120"><col class="c124"><col class="c47"><col class="c108"><col class="c118"><col class="c90"><col class="c65"><col class="c124"><col class="c144"><col class="c124"><col class="c109"><col class="c114"><col class="c67"><col class="c59"><col class="c68"><col class="c65"><col></colgroup>
          <thead><tr><th></th><th>Stok Kodu</th><th>Stok Adı</th><th>BRM</th><th>Belge<br>Miktarı</th><th>Gerçek<br>Miktar</th><th>Çevrim<br>Faktörü</th><th>Döviz</th><th>Belge Birim<br>Fiyat</th><th>Belge Döviz<br>Tutarı</th><th>Döviz Brm<br>Fiyat</th><th>Döviz Tutarı</th><th>Fatura Döviz<br>Tutar</th><th>KDV<br>Grup</th><th>KDV</th><th>GİS</th><th>İSK<br>Grp</th><th></th></tr></thead>
          <tbody>
            <tr><td class="mark"><svg viewBox="0 0 24 24"><path d="M3 2l18 10L3 22z" fill="#fdfeff" stroke="#4a93cf" stroke-width="2"/></svg></td><td class="code focus must">LGN2020</td><td class="code key must">TEST STOK</td><td>AD</td><td class="n">1</td><td class="n">1</td><td class="n">1</td><td>TL</td><td class="n">100</td><td class="n">100</td><td class="n">100</td><td class="n">100</td><td class="n">100</td><td class="n">18</td><td class="n">18</td><td>Evet</td><td class="n">0</td><td></td></tr>
            <tr class="blank"><td class="mark"><svg viewBox="0 0 24 24"><path d="M7 22l-5-8q-1-2 1-2l3 3V6q0-2 1.500-2T9 6v5-8q0-2 1.700-2T12.500 3v8-7q0-2 1.700-2T16 4v8-5q0-1.500 1.500-1.500T19 7v9q0 4-3 6z" fill="#fff" stroke="#d8433c" stroke-width="1.500"/></svg></td><td class="must"></td><td class="key must"></td><td></td><td></td><td></td><td></td><td></td><td></td><td></td><td></td><td></td><td></td><td></td><td></td><td></td><td></td><td></td></tr>
          </tbody>
        </table>
      </div>

      <div class="split"><i></i></div>

      <div class="summary">
        <ul class="links">
          <li><svg><use href="#folder"/></svg>M-sib-&gt;2020-A-10,1,(09/03/2020) 1</li>
          <li><svg><use href="#folder"/></svg><a href="#kps">KPS-&gt;2020-A-1,1 1</a></li>
          <li><svg><use href="#folder"/></svg>TKF-&gt;2020-A-1,1 1</li>
          <li><svg><use href="#folder"/></svg>M-p/o-&gt;2020-A-10,1,(09/02/2020) 1</li>
          <li><svg><use href="#folder"/></svg>M-nIR-&gt;A-10,1,(09/02/2020) 1</li>
        </ul>
        <div class="totals">
          <label for="s1">BrütTutar</label><input id="s1" value="100,00" readonly><input class="small" aria-label="BrütTutar 2" value="0,00" readonly>
          <label for="s2">İskontoTutarı</label><input id="s2" value="0,00" readonly><input class="small" aria-label="İskontoTutarı 2" value="0,00" readonly>
          <label for="s3">KDV</label><input id="s3" value="18,00" readonly><input class="small" aria-label="KDV 2" value="0,00" readonly>
          <label for="s4">ÖTV TUTARI</label><input id="s4" value="0,00" readonly><span></span>
          <label for="s5">FaturaTUTARI</label><input id="s5" value="118,00" readonly><span></span>
        </div>
      </div>
    </div>
  </main>
</div>

<footer class="status"><span>Ready</span><span>elegant</span></footer>
<div class="edge"><i></i></div>
</body>
</html>
```
FILE: styles.css
```css
:root {
  --ui: "Noto Sans", "Open Sans", sans-serif;
  --chrome: #cbd5f0;
  --navy: #5b6a97;
  --panel: #e8edf7;
  --ink: #1c1e28;
}
* { box-sizing: border-box; }
body {
  margin: 0;
  min-height: 100vh;
  display: flex;
  flex-direction: column;
  background: var(--chrome);
  color: var(--ink);
  font: 16px/24px var(--ui);
}
button, input, select { font: inherit; color: inherit; margin: 0; }
button { border: 0; background: none; padding: 0; }
ul { list-style: none; margin: 0; padding: 0; }
h1, h2 { margin: 0; font-weight: 400; }
.sprite { position: absolute; width: 0; height: 0; }

/* window title and menu */
.titlebar { display: flex; align-items: center; gap: 13px; height: 37px; padding: 0 0 2px 4px; border-top: 1px solid #a3a6b8; border-bottom: 1px solid #b9c3df; }
.titlebar h1 { font-size: 17px; line-height: 24px; color: #1b1c25; }
.appicon { width: 24px; height: 24px; }
.menubar { display: flex; align-items: center; height: 42px; }
.menubar button { padding: 0 12px; font-weight: 500; color: #10121c; }
.menubar .grip { height: 33px; margin-right: 3px; }
.grip { flex: none; width: 8px; height: 40px; margin: 0 4px 0 9px; background: conic-gradient(#68728f 25%, transparent 0 50%, #68728f 0 75%, transparent 0) 0 0 / 4px 4px; }
.grip:first-child { margin-left: 4px; }

/* toolbars */
.toolbar { display: flex; align-items: center; height: 50px; }
.toolbar.tools { height: 49px; }
.toolbar button { flex: none; width: 43px; height: 42px; display: flex; align-items: center; justify-content: center; }
.toolbar svg { width: 32px; height: 32px; }
.toolbar button.more { width: 16px; align-items: flex-end; padding-bottom: 4px; }
.more::after { content: ""; border: 4px solid transparent; border-top: 6px solid #4c566f; border-bottom: 0; }
.toolbar button.on { width: 41px; margin: 0 1px; background: #eef3fd; border: 1px solid #d9e1f5; }
.sep { flex: none; width: 1px; height: 42px; margin: 0 6px; background: #b3bddb; }
.pager { display: flex; gap: 6px; padding: 0 2px; }
.box { width: 88px; height: 30px; padding: 0 10px; line-height: 26px; text-align: right; color: #737a91; background: #c8d3f0; border: 1px solid #949cb4; }
.box.wide { width: 117px; }

/* workspace */
.workspace { position: relative; flex: 1; display: flex; border-top: 1px solid #47568a; }
.workspace::after { content: ""; position: absolute; inset: 820px 0 0 0; background: linear-gradient(rgba(0,0,0,0), rgba(0,0,0,.24)); pointer-events: none; }

.side { flex: none; width: 469px; background: #f9faff; border-right: 11px solid var(--navy); border-left: 1px solid #8a90a6; }
.side-head { display: flex; align-items: center; height: 34px; padding: 0 1px 0 6px; background: #3c558e; color: #eef2fc; }
.side-head h2 { flex: 1; font-size: 17px; }
.side-head button { width: 30px; height: 24px; display: flex; align-items: center; justify-content: center; }
.side-head svg { width: 15px; height: 15px; }
.search { display: flex; align-items: center; height: 32px; margin-top: 1px; padding: 0 3px 0 10px; border: solid #b9bfd6; border-width: 1px 0; }
.search input { flex: 1; border: 0; background: none; padding: 0; outline: 0; }
.search input::placeholder { color: #666873; opacity: 1; }
.search svg { width: 24px; height: 24px; }

/* navigation tree */
.tree { padding-left: 1px; }
.tree ul { padding-left: 26px; }
.tree li { position: relative; }
.row { display: flex; align-items: center; height: 26px; white-space: nowrap; }
.areas > li:nth-child(even) > .row, .leaves > li:nth-child(even) > .row { height: 27px; }
.row svg { flex: none; width: 24px; height: 24px; margin: 0 1px 0 5px; }
.row span { padding: 0 3px; }
.row .sel { background: #c9cfe9; padding-right: 5px; }
.tree ul > li::before { content: ""; position: absolute; left: 12px; top: 0; bottom: 0; width: 2px; background: #cfd2e2; }
.tree ul > li:last-child::before { bottom: auto; height: 14px; }
.tw { position: relative; flex: none; width: 26px; height: 14px; background: linear-gradient(#cfd2e2, #cfd2e2) 20px 6px / 6px 1px no-repeat; }
.tw::before { content: ""; display: block; width: 10px; height: 12px; margin: 1px 9px; background: #7d7f89; clip-path: polygon(0 0, 100% 50%, 0 100%); }
.tw::after { content: ""; position: absolute; left: 10px; top: 3px; width: 7px; height: 8px; background: #f9faff; clip-path: polygon(0 0, 100% 50%, 0 100%); }
.tw.open::before { width: 8px; height: 8px; margin: 3px 9px; background: #55565e; clip-path: polygon(100% 0, 100% 100%, 0 100%); }
.tw.open::after { content: none; }
.root > .row .tw { background: none; }
.leaves .row { background: linear-gradient(#cfd2e2, #cfd2e2) 13px 13px / 13px 1px no-repeat; padding-left: 27px; }

/* document window */
.doc { flex: 1; min-width: 0; display: flex; flex-direction: column; padding-bottom: 7px; background: #c8d1ef; }
.doctabs { display: flex; height: 35px; padding: 2px 0 0 6px; background: var(--navy); }
.doctab { display: flex; align-items: center; padding: 0 8px 0 5px; background: #fbca80; color: #2b2115; font-size: 17px; }
.doctab > svg { width: 26px; height: 26px; margin-right: 4px; }
.doctab button { display: flex; margin-left: 18px; }
.doctab button svg { width: 12px; height: 12px; }
.frame { position: relative; flex: 1; display: flex; flex-direction: column; margin: 7px 0 0 8px; border: solid; border-width: 2px 0 2px 2px; border-color: #5f5d5c #80859a #eef0f6; background: var(--panel); }
.frame::before { content: ""; position: absolute; left: -8px; right: 0; top: -9px; height: 7px; background: #e9c894; }

/* invoice header form */
.invoice { display: flex; align-items: flex-start; gap: 10px; padding: 0 14px 41px 0; border-bottom: 2px solid #c3c9d8; }
.head { flex: none; display: grid; grid-template-columns: 155px 631px; grid-template-rows: 34px 34px 35px 36px 34px 35px 34px 34px 34px; gap: 6px 5px; padding-top: 20px; }
.head > label { align-self: end; text-align: right; white-space: nowrap; font-size: 18px; }
.fields { display: flex; gap: 5px; align-items: flex-start; }
.invoice input, .invoice select { height: 34px; padding: 0 4px 2px; min-width: 0; border: 2px solid #c8cede; border-radius: 0; background-color: #f9fbff; color: #14161f; outline: 0; }
.invoice input:disabled { padding: 1px 5px 3px; border: 1px solid #6b7080; background-color: #e6ebf5; color: #80828d; }
.invoice select { appearance: none; padding: 0 28px 2px 4px; background: url("data:image/svg+xml,%3Csvg xmlns='http://www.w3.org/2000/svg' width='8' height='6'%3E%3Cpath d='M0 0h8L4 6z' fill='%23596a92'/%3E%3C/svg%3E") right 10px center no-repeat, linear-gradient(#c1ccea, #c1ccea) right 1px center / 26px 28px no-repeat #f9fbff; }
.invoice select:disabled { opacity: 1; color: #80828d; background: url("data:image/svg+xml,%3Csvg xmlns='http://www.w3.org/2000/svg' width='8' height='6'%3E%3Cpath d='M0 0h8L4 6z' fill='%23777777'/%3E%3C/svg%3E") right 10px center no-repeat, linear-gradient(#edeef0, #edeef0) right 1px center / 26px 28px no-repeat #e6ebf5; }
.invoice input.num, .invoice input.num:disabled { text-align: right; padding-right: 8px; }
.invoice input.num:disabled { padding-right: 11px; }
.invoice input.mid { text-align: center; }
.invoice input.must { background-image: linear-gradient(to top right, transparent 50%, #b01822 50%); background-size: 11px 11px; background-position: right top; background-repeat: no-repeat; background-origin: border-box; background-clip: border-box; border-top-color: rgba(190,198,218,.8); border-right-color: rgba(190,198,218,.8); }
.grow { flex: 1; }
.w50 { width: 50px; } .w83 { width: 83px; } .w116 { width: 116px; } .w120 { width: 120px; } .w129 { width: 129px; }
.w135 { width: 135px; } .w152 { width: 152px; } .w167 { width: 167px; } .w176 { width: 176px; } .w223 { width: 223px; }
.w227 { width: 227px; } .w241 { width: 241px; } .w297 { width: 297px; }
.radios { flex: 1; display: flex; justify-content: space-between; align-items: center; height: 40px; padding: 0 5px 0 6px; font-size: 15px; color: #80828d; }
.radios label, .tick { display: flex; align-items: center; gap: 8px; white-space: nowrap; }
.invoice input[type=radio] { appearance: none; width: 17px; height: 17px; padding: 0; border: 1px solid #9a9dab; border-radius: 50%; background: #fafbff; }
.invoice input[type=radio]:checked { background: radial-gradient(#8b8e99 4px, #fafbff 5px); }
.tick { margin-left: auto; height: 34px; gap: 10px; font-size: 18px; }
.tick[for] { padding-right: 3px; }
.invoice input[type=checkbox] { appearance: none; width: 17px; height: 17px; padding: 0; border: 1px solid #8d92a3; background: #fafbff; }

/* tabbed detail section */
.detail { flex: none; padding-top: 3px; }
.tabs { display: flex; height: 30px; }
.tabs button { padding: 0 14px; font: 17px/24px "Liberation Serif", serif; color: #1c1e28; }
.tabs .cur { margin-bottom: -3px; padding: 0 12px 2px; border: 2px solid #cdd5ea; border-bottom: 0; background: #f6f9ff; color: #24599b; }
.pane { display: grid; grid-template-columns: 169px 107px 325px 130px; grid-template-rows: 34px 34px 34px 37px 34px 34px 39px 34px; gap: 6px 5px; align-items: start; padding: 24px 23px 11px 1px; border: 3px solid #cdd5ea; }
.pane > label { font-size: 17px; line-height: 34px; padding-right: 4px; text-align: right; white-space: nowrap; }
.pane .two, .pane .span { grid-column: span 2; }
.span { display: flex; justify-content: space-between; }
.span.end { justify-content: flex-end; gap: 43px; }
.pane button { height: 34px; padding: 0 0 2px; font-size: 17px; border: 2px solid #a8b3d0; background: #c9d4f1; }
.pane button:disabled { color: #8b91a6; }
.pane button.tall { height: 40px; }
.pane button.raised { border: 2px solid; border-color: #f6f7fb #6d7080 #6d7080 #f6f7fb; background: #eceef5; }
.invoice input.num.wide:disabled { padding-right: 12px; }

/* splitter */
.split { flex: none; height: 8px; display: flex; justify-content: center; background: #5a6796; }
.invoice + .split { margin-top: 5px; }
.split i { width: 30px; height: 2px; margin: 3px 0 0 84px; background: repeating-linear-gradient(90deg, #dfe4f2 0 2px, transparent 2px 3px); }

/* invoice lines */
.lines { flex: none; height: 257px; overflow: hidden; background: linear-gradient(#ccd5f0, #ccd5f0) 0 0 / 37px 100% no-repeat #f8faff; }
.lines table { width: 100%; table-layout: fixed; border-collapse: separate; border-spacing: 0; white-space: nowrap; }
.lines th { height: 57px; padding: 2px 0 0; vertical-align: top; font-size: 17px; line-height: 23px; font-weight: 400; background: #ccd5f0; border: solid; border-width: 1px 1px 2px 1px; border-color: #e4e9f8 #8f94a5 #9397a8 #e4e9f8; color: #24283a; }
.lines td { height: 31px; padding: 0 7px; border-right: 1px solid #eff1f8; border-bottom: 1px solid #eff1f8; background: #fbfcff; font-size: 17px; }
.lines td.code { font-size: 18px; }
.blank td { background: #f2f4fe; }
.lines td.n { text-align: right; }
.lines td.mark { padding: 0 0 0 2px; background: #ccd5f0; border-color: #8f94a5; border-bottom-color: #8f94a5; }
.mark svg { display: block; width: 24px; height: 24px; }
.lines td.key { background-color: #fffbd0; }
.lines td.must { background-image: linear-gradient(to top right, transparent 50%, #b01822 50%); background-size: 9px 9px; background-position: right top; background-repeat: no-repeat; }
.lines td.focus { padding-left: 5px; border: 2px dotted #33343c; }
.c37 { width: 37px; } .c47 { width: 47px; } .c59 { width: 59px; } .c65 { width: 65px; } .c67 { width: 67px; } .c68 { width: 68px; }
.c90 { width: 90px; } .c108 { width: 108px; } .c109 { width: 109px; } .c114 { width: 114px; } .c118 { width: 118px; }
.c120 { width: 120px; } .c124 { width: 124px; } .c144 { width: 144px; }

/* linked documents and totals */
.summary { flex: 1; display: flex; align-items: flex-start; padding: 10px 0 53px 271px; margin-bottom: 8px; border-bottom: 2px solid #c0c6d4; }
.links { align-self: stretch; width: 577px; padding-left: 18px; background: #fbfcff; font: 18px/26px "Liberation Mono", monospace; color: #15161c; }
.links li { position: relative; display: flex; align-items: center; height: 26px; padding-left: 20px; white-space: pre; }
.links li:nth-child(even) { height: 27px; }
.links svg { width: 21px; height: 20px; margin-right: 8px; }
.links a { color: #3d78bd; line-height: 22px; text-decoration: none; border-bottom: 2px solid #3d78bd; }
.links li::before { content: ""; position: absolute; left: 0; top: 0; bottom: 0; border-left: 1px dotted #666; }
.links li:first-child::before { top: 13px; }
.links li:last-child::before { bottom: 13px; }
.links li::after { content: ""; position: absolute; left: 0; top: 13px; width: 16px; border-top: 1px dotted #666; }
.totals { display: grid; grid-template-columns: 110px 153px 130px; grid-auto-rows: 30px; gap: 6px 24px; padding-left: 5px; }
.totals label { margin-right: -9px; line-height: 30px; text-align: right; white-space: nowrap; }
.totals input { height: 30px; padding: 0 3px 5px; border: 1px solid #5c616e; background: transparent; text-align: right; border-radius: 0; }
.totals input.small { align-self: end; height: 25px; padding-bottom: 0; }

/* status bar */
.status { display: flex; justify-content: space-between; align-items: center; height: 37px; padding: 0 23px 0 14px; background: #303d6c; color: #c5cadb; font-size: 17px; }
.edge { height: 6px; padding-left: 684px; background: #14212f; }
.edge i { display: block; width: 74px; height: 6px; background: #37434c; }
```
